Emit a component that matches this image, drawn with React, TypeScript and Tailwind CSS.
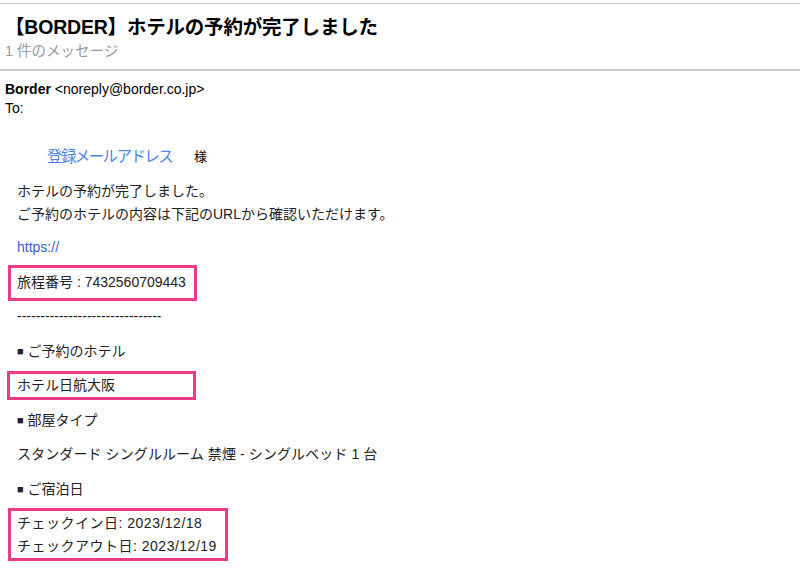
const font = '[font-family:"Liberation_Sans","Noto_Sans_CJK_JP",sans-serif]';

function Marked({ children, className }: { children: React.ReactNode; className: string }) {
  return (
    <div className="relative">
      {children}
      {/* pink annotation box */}
      <div className={`absolute border-[3px] border-[#ec3b86] pointer-events-none ${className}`} />
    </div>
  );
}

export default function App() {
  return (
    <div className={`w-[800px] h-[568px] overflow-hidden bg-white text-[#222] ${font}`}>
      <div className="pt-[3px]">
        <div className="h-px bg-[#c8c8c8]" />
      </div>

      {/* Subject */}
      <div className="px-[5px] pt-[11px]">
        <h1 className="text-[19.5px] leading-[24px] font-bold text-black tracking-[-0.2px]">
          【BORDER】ホテルの予約が完了しました
        </h1>
        <div className="mt-[2px] text-[14.5px] leading-[20px] text-[#999]">1 件のメッセージ</div>
      </div>

      <div className="mt-[8px] h-[2px] bg-[#cfcfcf]" />

      {/* Sender */}
      <div className="px-[5px] pt-[9px] text-[14px] leading-[19px] text-black">
        <div>
          <span className="font-bold">Border</span> &lt;noreply@border.co.jp&gt;
        </div>
        <div>To:</div>
      </div>

      {/* Body */}
      <div className="px-[17px] pt-[27px] text-[14px] leading-[23px] text-[#222]">
        <div className="flex items-end pl-[30px] h-[23px]">
          <span className="text-[15.5px] text-[#4a86e8] tracking-[-1.6px]">登録メールアドレス</span>
          <span className="ml-[22px] text-[13px] text-black">様</span>
        </div>

        <div className="mt-[12px]">
          <p>ホテルの予約が完了しました。</p>
          <p>ご予約のホテルの内容は下記のURLから確認いただけます。</p>
        </div>

        <div className="mt-[10px] flex flex-col gap-[11.5px]">
          <p className="text-[#3c5bd6]">https://</p>

          <Marked className="-left-[9px] -top-[6px] w-[189px] h-[36px]">
            <p>旅程番号 : 7432560709443</p>
          </Marked>

          <p>-------------------------------</p>

          <p>
            <span className="text-[11px] align-[1px]">■</span> ご予約のホテル
          </p>

          <Marked className="-left-[10px] -top-[3px] w-[189px] h-[29px]">
            <p>ホテル日航大阪</p>
          </Marked>

          <p>
            <span className="text-[11px] align-[1px]">■</span> 部屋タイプ
          </p>

          <p className="tracking-[0.1px]">スタンダード シングルルーム 禁煙 - シングルベッド 1 台</p>

          <p>
            <span className="text-[11px] align-[1px]">■</span> ご宿泊日
          </p>

          <Marked className="-left-[9px] -top-[4px] w-[220px] h-[53px]">
            <div className="tracking-[0.5px]">
              <p>チェックイン日: 2023/12/18</p>
              <p>チェックアウト日: 2023/12/19</p>
            </div>
          </Marked>
        </div>
      </div>
    </div>
  );
}
